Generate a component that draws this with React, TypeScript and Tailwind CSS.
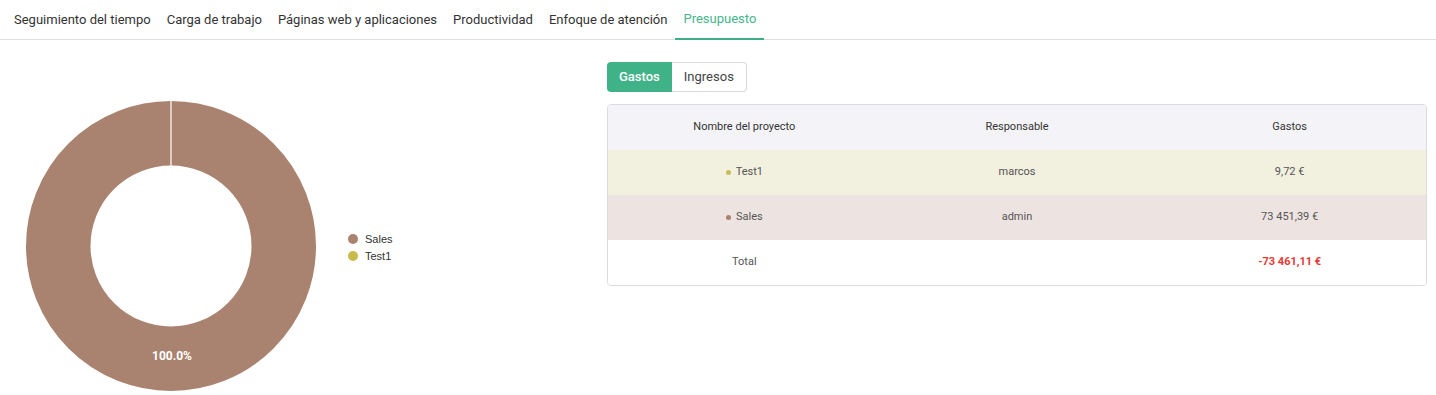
const tabs = [
  'Seguimiento del tiempo',
  'Carga de trabajo',
  'Páginas web y aplicaciones',
  'Productividad',
  'Enfoque de atención',
  'Presupuesto',
];

const rows = [
  { name: 'Test1', dot: 'bg-[#c9bb5a]', owner: 'marcos', amount: '9,72 €', bg: 'bg-[#f2f0df]' },
  { name: 'Sales', dot: 'bg-[#a9836f]', owner: 'admin', amount: '73 451,39 €', bg: 'bg-[#ede4e1]' },
];

function Donut() {
  // center of ring in svg coords
  const cx = 171;
  const cy = 206;
  return (
    <svg width="600" height="355" viewBox="0 0 600 355">
      <circle cx={cx} cy={cy} r={112.75} fill="none" stroke="#a9836f" strokeWidth={64.5} />
      <line x1={cx} y1={cy - 146} x2={cx} y2={cy - 80} stroke="#ffffff" strokeWidth={1.2} />
      <text
        x={cx + 1}
        y={cy + 114}
        textAnchor="middle"
        fill="#ffffff"
        fontSize="12"
        fontWeight="700"
        fontFamily="Roboto, sans-serif"
      >
        100.0%
      </text>
      {/* legend */}
      <circle cx={353} cy={199} r={5} fill="#a9836f" />
      <text x={365} y={203} fontSize="11" fill="#333" fontFamily="'Liberation Sans', Arial, sans-serif">
        Sales
      </text>
      <circle cx={353} cy={216} r={5} fill="#c9bb4a" />
      <text x={365} y={220} fontSize="11" fill="#333" fontFamily="'Liberation Sans', Arial, sans-serif">
        Test1
      </text>
    </svg>
  );
}

export default function App() {
  return (
    <div className="w-[1436px] h-[395px] bg-white overflow-hidden font-['Roboto',sans-serif]">
      {/* Tabs */}
      <div className="flex h-10 border-b border-[#e0e0e0] pl-[6px] text-[13px]">
        {tabs.map((t) => {
          const active = t === 'Presupuesto';
          return (
            <div
              key={t}
              className={
                active
                  ? 'flex items-center px-2 -mb-px border-b-2 border-[#3daf87] text-[#46b58c]'
                  : 'flex items-center px-2 text-[#333]'
              }
            >
              {t}
            </div>
          );
        })}
      </div>

      <div className="flex">
        {/* Chart */}
        <div className="w-[607px] flex-none">
          <Donut />
        </div>

        {/* Budget table */}
        <div className="flex-1 pt-[22px] pr-[9px]">
          <div className="flex text-[13px]">
            <button className="h-[30px] px-[12px] rounded-l-[4px] bg-[#40b287] text-white font-medium">
              Gastos
            </button>
            <button className="h-[30px] px-[12px] rounded-r-[4px] border border-l-0 border-[#d9d9d9] text-[#444]">
              Ingresos
            </button>
          </div>

          <div className="mt-[12px] border border-[#dcdcdc] rounded-[4px] overflow-hidden text-[11px] text-[#555]">
            <div className="grid grid-cols-3 h-[45px] items-center text-center bg-[#f4f4f8] text-[#333]">
              <div>Nombre del proyecto</div>
              <div>Responsable</div>
              <div>Gastos</div>
            </div>
            {rows.map((r) => (
              <div key={r.name} className={`grid grid-cols-3 h-[45px] items-center text-center ${r.bg}`}>
                <div className="flex items-center justify-center gap-[5px]">
                  <span className={`w-[5px] h-[5px] rounded-full ${r.dot}`} />
                  {r.name}
                </div>
                <div>{r.owner}</div>
                <div>{r.amount}</div>
              </div>
            ))}
            <div className="grid grid-cols-3 h-[45px] items-center text-center bg-white">
              <div>Total</div>
              <div />
              <div className="text-[#e53935] font-bold">-73 461,11 €</div>
            </div>
          </div>
        </div>
      </div>
    </div>
  );
}
